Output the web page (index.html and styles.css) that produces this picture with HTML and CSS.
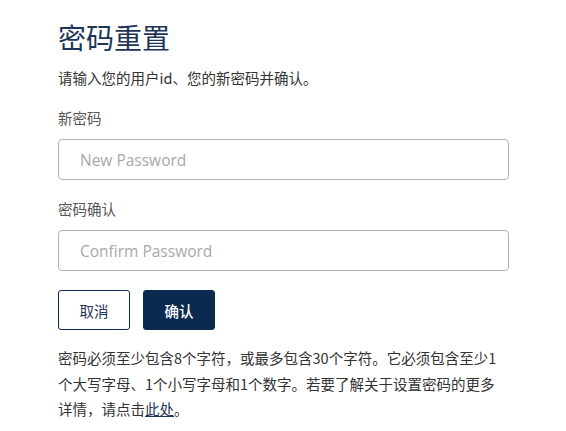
FILE: index.html
```html
<!DOCTYPE html>
<html lang="zh-CN">
<head>
<meta charset="utf-8">
<title>密码重置</title>
<link rel="stylesheet" href="styles.css">
</head>
<body>
<main class="page">
  <h1 class="title">密码重置</h1>
  <p class="intro">请输入您的用户id、您的新密码并确认。</p>
  <form class="form">
    <label class="label" for="pw1">新密码</label>
    <input class="field field-first" id="pw1" type="password" placeholder="New Password">
    <label class="label label-second" for="pw2">密码确认</label>
    <input class="field" id="pw2" type="password" placeholder="Confirm Password">
    <div class="actions">
      <button type="button" class="btn btn-cancel">取消</button>
      <button type="button" class="btn btn-confirm">确认</button>
    </div>
  </form>
  <p class="note">密码必须至少包含8个字符，或最多包含30个字符。它必须包含至少1个大写字母、1个小写字母和1个数字。若要了解关于设置密码的更多详情，请点击<a href="#" class="link">此处</a>。</p>
</main>
</body>
</html>
```

FILE: styles.css
```css
* { box-sizing: border-box; }
html, body { margin: 0; padding: 0; background: #fff; }
body {
  font-family: "Noto Sans CJK SC", "Liberation Sans", sans-serif;
  color: #333;
}
.page {
  width: 451px;
  margin-left: 58px;
  padding-top: 19px;
  display: flex;
  flex-direction: column;
}
.title {
  margin: 0;
  font-size: 28px;
  line-height: 36px;
  font-weight: 400;
  color: #1d3557;
}
.intro {
  margin: 13px 0 0;
  font-size: 14.5px;
  line-height: 20px;
  color: #333;
}
.form {
  display: flex;
  flex-direction: column;
  margin-top: 20px;
}
.label {
  font-size: 14.5px;
  line-height: 20px;
  color: #555;
}
.label-second { margin-top: 19px; }
.field {
  margin-top: 11px;
  height: 41px;
  width: 451px;
  border: 1px solid #b3b3b3;
  border-radius: 4px;
  padding: 0 21px;
  font-family: "Open Sans", "Noto Sans CJK SC", sans-serif;
  font-size: 15.5px;
  color: #333;
  outline: none;
  background: #fff;
}
.field-first { margin-top: 11px; }
.field::placeholder { color: #a8a8a8; }
.actions {
  display: flex;
  gap: 13px;
  margin-top: 19px;
}
.btn {
  width: 72px;
  height: 40px;
  border-radius: 3px;
  font-family: "Noto Sans CJK SC", sans-serif;
  font-size: 14.5px;
  cursor: pointer;
}
.btn-cancel {
  background: #fff;
  border: 1px solid #0d2b52;
  color: #1d3557;
}
.btn-confirm {
  background: #0b2a50;
  border: 1px solid #0b2a50;
  color: #fff;
  font-weight: 500;
}
.note {
  width: 445px;
  margin: 15px 0 0;
  font-size: 14.5px;
  line-height: 25.5px;
  color: #333;
}
.link {
  color: #1d3557;
  text-decoration: underline;
}
```
